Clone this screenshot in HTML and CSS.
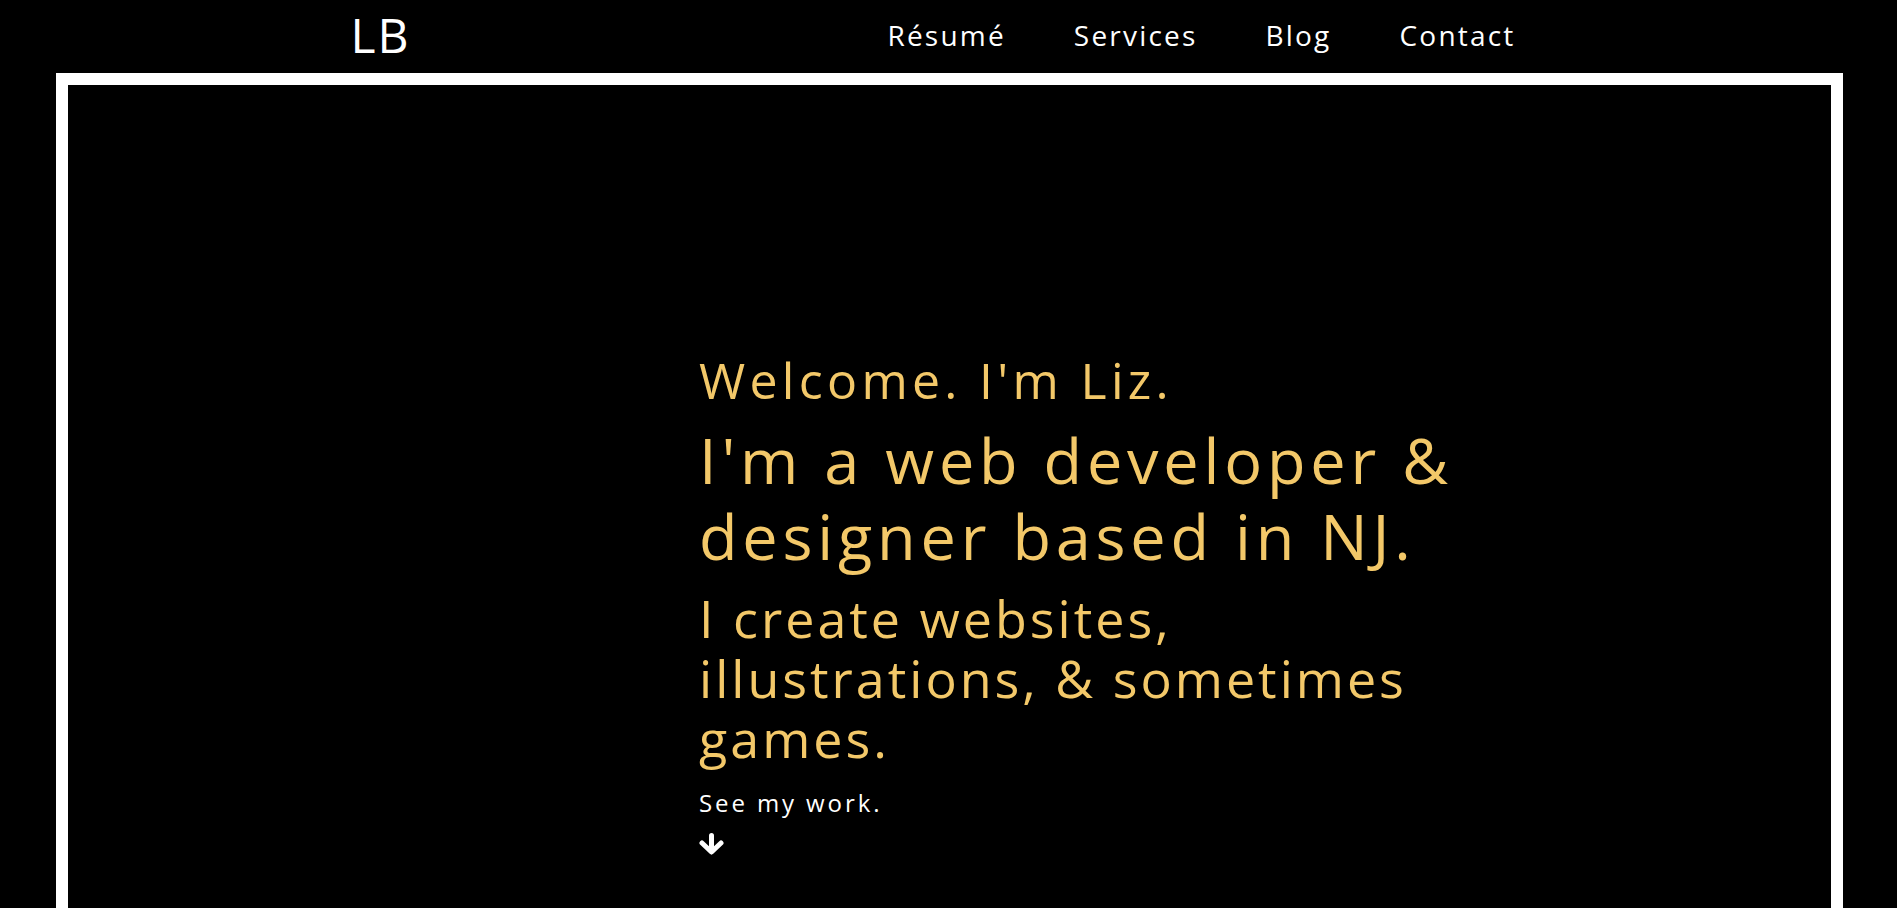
FILE: index.html
```html
<!DOCTYPE html>
<html lang="en">
<head>
<meta charset="utf-8">
<title>LB</title>
<link rel="stylesheet" href="styles.css">
</head>
<body>
<div class="page">
  <header class="site-header">
    <div class="header-inner">
      <a class="logo" href="#">LB</a>
      <nav class="nav">
        <a href="#">Résumé</a>
        <a href="#">Services</a>
        <a href="#">Blog</a>
        <a href="#">Contact</a>
      </nav>
    </div>
  </header>
  <section class="frame">
    <div class="hero">
      <h1 class="welcome">Welcome. I'm Liz.</h1>
      <h2 class="role">I'm a web developer &amp; designer based in NJ.</h2>
      <p class="create">I create websites, illustrations, &amp; sometimes games.</p>
      <a class="see" href="#">See my work.</a>
      <a class="arrow" href="#" aria-label="See my work">
        <svg width="25" height="22" viewBox="0 0 25 22" aria-hidden="true">
          <path d="M12.5 2.5 V17" stroke="#fff" stroke-width="5" stroke-linecap="round" fill="none"/>
          <path d="M3 10 L12.5 19 L22 10" stroke="#fff" stroke-width="5" stroke-linecap="round" stroke-linejoin="round" fill="none"/>
        </svg>
      </a>
    </div>
  </section>
</div>
</body>
</html>
```
FILE: styles.css
```css
html, body {
  margin: 0;
  padding: 0;
  background: #000;
}

body {
  font-family: "Open Sans", "Noto Sans", sans-serif;
  color: #fff;
}

.page {
  height: 100vh;
  overflow: hidden;
}

.site-header {
  height: 73px;
}

.header-inner {
  width: 1200px;
  height: 73px;
  margin: 0 auto;
  display: flex;
  justify-content: space-between;
  align-items: center;
}

.logo {
  color: #fff;
  text-decoration: none;
  font-size: 48px;
  letter-spacing: 2px;
  line-height: 1;
  padding-left: 2px;
  margin-top: -4px;
}

.nav {
  display: flex;
  margin-top: -3px;
}

.nav a {
  color: #fff;
  text-decoration: none;
  font-size: 28px;
  letter-spacing: 2.2px;
  line-height: 1;
  padding: 0 34px;
}

.nav a:last-child {
  padding-right: 33px;
}

.frame {
  margin: 0 54px 0 56px;
  border: 12px solid #fff;
  min-height: 1000px;
  box-sizing: border-box;
}

.hero {
  padding: 265px 0 0 631px;
  max-width: 820px;
  color: #f3c869;
  display: flex;
  flex-direction: column;
  align-items: flex-start;
}

.welcome {
  margin: 0;
  font-size: 50px;
  font-weight: 400;
  letter-spacing: 4.3px;
  line-height: 60px;
}

.role {
  margin: 12px 0 0;
  font-size: 63px;
  font-weight: 400;
  letter-spacing: 4.8px;
  line-height: 76px;
}

.create {
  margin: 14px 0 0;
  font-size: 52px;
  letter-spacing: 3px;
  line-height: 60px;
}

.see {
  color: #fff;
  text-decoration: none;
  font-size: 24px;
  letter-spacing: 2.9px;
  line-height: 30px;
  margin-top: 20px;
}

.arrow {
  display: flex;
  margin-top: 15px;
}
```
